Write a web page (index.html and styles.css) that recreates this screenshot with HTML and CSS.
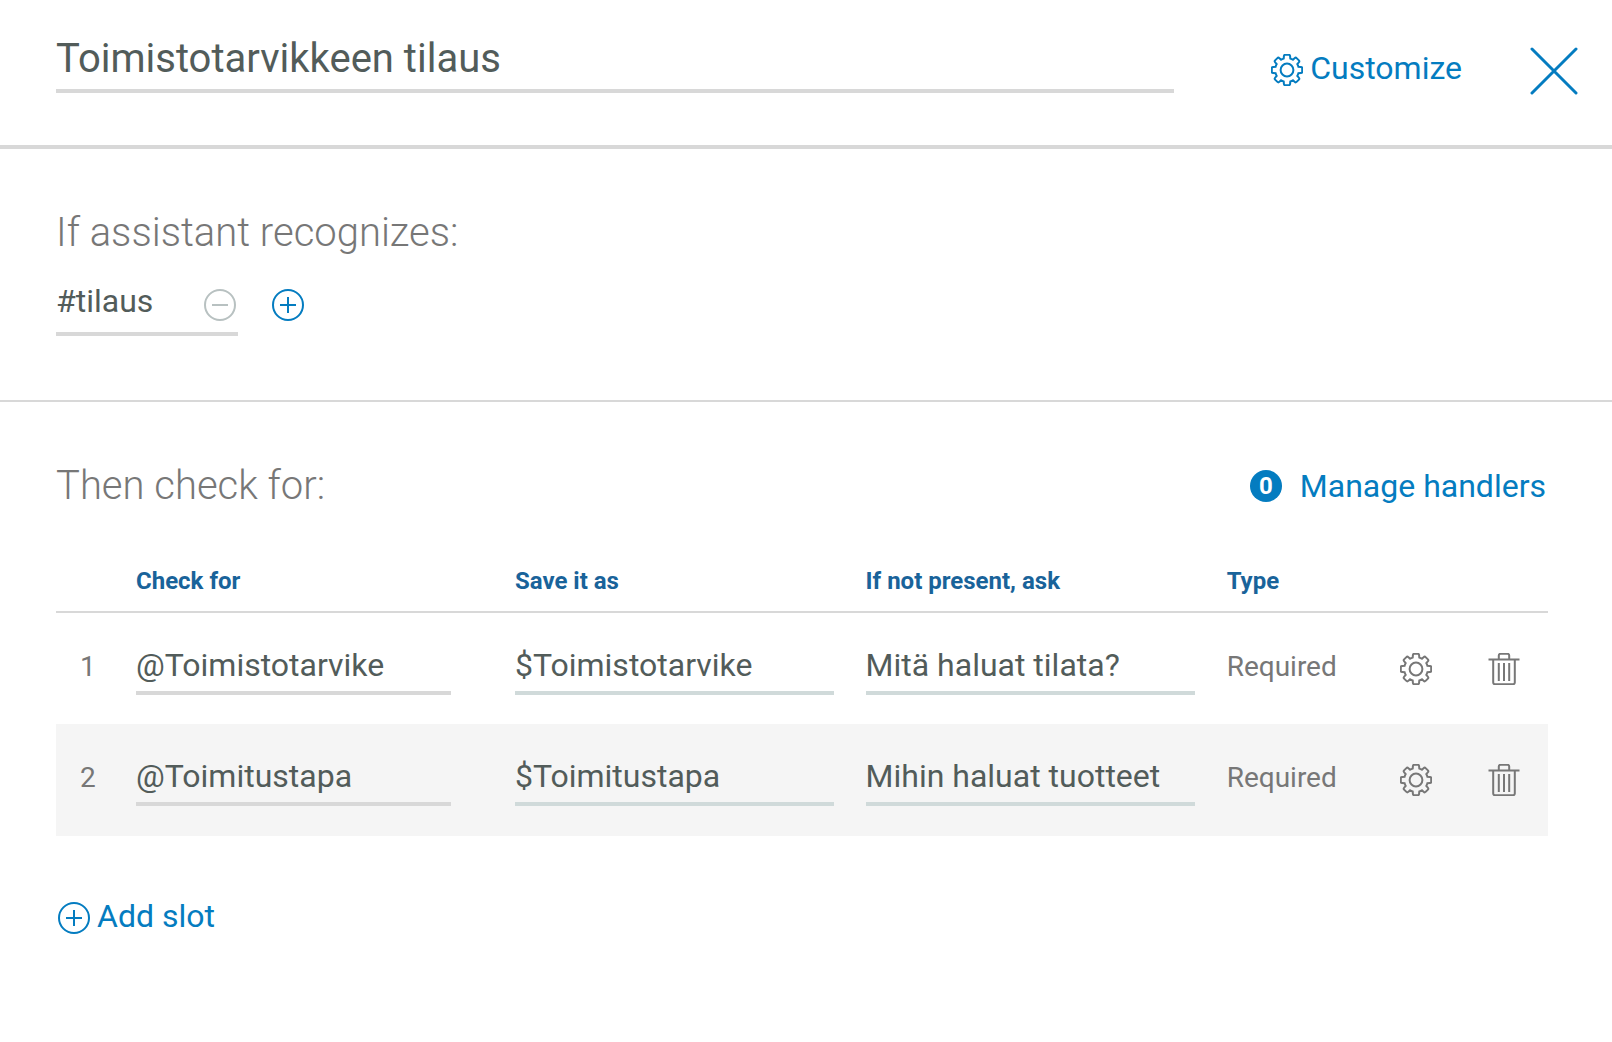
FILE: index.html
```html
<!DOCTYPE html>
<html lang="en">
<head>
<meta charset="utf-8">
<meta name="viewport" content="width=device-width, initial-scale=1">
<title>Toimistotarvikkeen tilaus</title>
<link rel="stylesheet" href="styles.css">
</head>
<body>
<svg class="sprite" aria-hidden="true">
  <symbol id="gear" viewBox="0 0 32 32">
    <path d="M12.700 4.600L12.900 2.100Q13 .8 14.200 .8H17.800Q19 .8 19.100 2.100L19.300 4.600Q20.700 5 21.900 5.700L23.600 4.200Q24.700 3.200 25.600 4.100L27.900 6.400Q28.800 7.300 27.800 8.400L26.300 10.100Q27 11.300 27.400 12.700L29.900 12.900Q31.200 13 31.200 14.200V17.800Q31.200 19 29.900 19.100L27.400 19.300Q27 20.700 26.300 21.900L27.800 23.600Q28.800 24.700 27.900 25.600L25.600 27.900Q24.700 28.800 23.600 27.800L21.900 26.300Q20.700 27 19.300 27.400L19.100 29.900Q19 31.200 17.800 31.200H14.200Q13 31.200 12.900 29.900L12.700 27.400Q11.300 27 10.100 26.300L8.400 27.800Q7.300 28.800 6.400 27.900L4.100 25.600Q3.200 24.700 4.200 23.600L5.700 21.900Q5 20.700 4.600 19.300L2.100 19.100Q.8 19 .8 17.800V14.200Q.8 13 2.100 12.900L4.600 12.700Q5 11.300 5.700 10.100L4.200 8.400Q3.200 7.300 4.100 6.400L6.400 4.100Q7.300 3.200 8.400 4.200L10.100 5.700Q11.300 5 12.700 4.600Z"/>
    <circle cx="16" cy="16" r="6.400"/>
  </symbol>
  <symbol id="plus" viewBox="0 0 32 32">
    <circle cx="16" cy="16" r="15"/>
    <path d="M8 16H24M16 8V24"/>
  </symbol>
  <symbol id="minus" viewBox="0 0 32 32">
    <circle cx="16" cy="16" r="15"/>
    <path d="M8 16H24"/>
  </symbol>
  <symbol id="trash" viewBox="0 0 32 32">
    <path d="M.5 6.500H31.500M5.200 6.500V29.500Q5.200 31.200 6.900 31.200H25.100Q26.800 31.200 26.800 29.500V6.500M10.800 6.500V2.500Q10.800 .8 12.500 .8H19.500Q21.200 .8 21.200 2.500V6.500M10.800 10V28M16 10V28M21.200 10V28"/>
  </symbol>
</svg>

<header class="header">
  <input class="field field-title" type="text" aria-label="Node name" value="Toimistotarvikkeen tilaus">
  <button class="action customize" type="button"><svg class="icon"><use href="#gear"/></svg>Customize</button>
  <button class="icon-button close" type="button" aria-label="Close">
    <svg class="close-icon" viewBox="0 0 48 48"><path d="M2 2L46 46M46 2L2 46"/></svg>
  </button>
</header>

<main>
  <section class="condition">
    <h2 class="heading">If assistant recognizes:</h2>
    <div class="condition-row">
      <div class="intent">
        <input class="intent-input" type="text" aria-label="Condition" value="#tilaus">
        <button class="icon-button muted" type="button" aria-label="Remove condition"><svg class="icon"><use href="#minus"/></svg></button>
      </div>
      <button class="icon-button primary" type="button" aria-label="Add condition"><svg class="icon"><use href="#plus"/></svg></button>
    </div>
  </section>

  <section class="slots">
    <div class="slots-head">
      <h2 class="heading">Then check for:</h2>
      <button class="action handlers" type="button"><span class="badge">0</span>Manage handlers</button>
    </div>
    <table class="slot-table">
      <colgroup>
        <col class="col-number"><col class="col-check"><col class="col-save"><col class="col-ask"><col><col class="col-settings"><col class="col-delete">
      </colgroup>
      <thead>
        <tr><th></th><th scope="col">Check for</th><th scope="col">Save it as</th><th scope="col">If not present, ask</th><th scope="col">Type</th><th></th><th></th></tr>
      </thead>
      <tbody>
        <tr>
          <td class="number">1</td>
          <td class="check"><input class="field" type="text" aria-label="Check for, slot 1" value="@Toimistotarvike"></td>
          <td class="save"><input class="field field-cool" type="text" aria-label="Save it as, slot 1" value="$Toimistotarvike"></td>
          <td class="ask"><input class="field field-cool" type="text" aria-label="If not present, ask, slot 1" value="Mitä haluat tilata?"></td>
          <td class="type">Required</td>
          <td><button class="icon-button" type="button" aria-label="Edit slot 1"><svg class="icon"><use href="#gear"/></svg></button></td>
          <td><button class="icon-button" type="button" aria-label="Delete slot 1"><svg class="icon"><use href="#trash"/></svg></button></td>
        </tr>
        <tr>
          <td class="number">2</td>
          <td class="check"><input class="field" type="text" aria-label="Check for, slot 2" value="@Toimitustapa"></td>
          <td class="save"><input class="field field-cool" type="text" aria-label="Save it as, slot 2" value="$Toimitustapa"></td>
          <td class="ask"><input class="field field-cool" type="text" aria-label="If not present, ask, slot 2" value="Mihin haluat tuotteet"></td>
          <td class="type">Required</td>
          <td><button class="icon-button" type="button" aria-label="Edit slot 2"><svg class="icon"><use href="#gear"/></svg></button></td>
          <td><button class="icon-button" type="button" aria-label="Delete slot 2"><svg class="icon"><use href="#trash"/></svg></button></td>
        </tr>
      </tbody>
    </table>
    <button class="action add-slot" type="button"><svg class="icon"><use href="#plus"/></svg>Add slot</button>
  </section>
</main>
</body>
</html>
```

FILE: styles.css
```css
* {
  box-sizing: border-box;
}

body {
  margin: 0;
  background: #fff;
  color: #525c5a;
  font-family: Roboto, "Liberation Sans", sans-serif;
  font-size: 32px;
  line-height: 40px;
}

button,
input {
  margin: 0;
  padding: 0;
  border: 0;
  border-radius: 0;
  background: transparent;
  color: inherit;
  font: inherit;
}

button {
  cursor: pointer;
}

.sprite {
  position: absolute;
  width: 0;
  height: 0;
}

.icon,
.close-icon {
  display: block;
  flex: none;
  fill: none;
  stroke: currentColor;
  stroke-width: 2px;
}

.icon {
  width: 32px;
  height: 32px;
}

.close-icon {
  width: 48px;
  height: 48px;
  stroke-width: 3px;
  stroke-linecap: round;
}

.icon-button {
  display: block;
  flex: none;
  color: #777;
}

.icon-button.muted {
  color: #b8c1c1;
}

.icon-button.primary,
.icon-button.close {
  color: #047cc0;
}

.action {
  display: flex;
  align-items: center;
  flex: none;
  gap: 7px;
  color: #047cc0;
  white-space: nowrap;
}

.action .icon {
  margin-top: 4px;
}

.field {
  display: block;
  width: 100%;
  height: 52px;
  padding-bottom: 4px;
  border-bottom: 4px solid #d8d8d8;
}

.field-cool {
  border-bottom-color: #d0dada;
}

.header {
  display: flex;
  align-items: flex-start;
  padding: 28px 34px 50px 56px;
  border-bottom: 4px solid #d8d8d8;
}

.field-title {
  flex: 1;
  min-width: 0;
  height: 65px;
  padding-bottom: 0;
  font-size: 40px;
}

.customize {
  margin: 20px 68px 0 97px;
}

.close {
  margin-top: 19px;
}

.heading {
  margin: 0;
  color: #777;
  font-size: 40px;
  font-weight: 300;
  line-height: 48px;
}

.condition {
  padding: 60px 56px 64px;
  border-bottom: 2px solid #d8d8d8;
}

.condition-row {
  display: flex;
  align-items: flex-start;
  gap: 34px;
  margin-top: 22px;
}

.intent {
  display: flex;
  align-items: flex-start;
  width: 182px;
  height: 57px;
  padding-right: 2px;
  border-bottom: 4px solid #d8d8d8;
}

.intent-input {
  flex: 1;
  min-width: 0;
  height: 44px;
}

.condition .icon-button {
  margin-top: 10px;
}

.slots {
  padding: 60px 64px 56px 56px;
}

.slots-head {
  display: flex;
  justify-content: space-between;
  align-items: center;
}

.handlers {
  gap: 18px;
  margin-right: 2px;
}

.badge {
  width: 32px;
  height: 32px;
  border-radius: 50%;
  background: #047cc0;
  color: #fff;
  font-size: 24px;
  font-weight: 700;
  line-height: 32px;
  text-align: center;
}

.slot-table {
  width: 100%;
  margin-top: 52px;
  border-collapse: collapse;
  table-layout: fixed;
}

.col-number { width: 80px; }
.col-check { width: 25.4%; }
.col-save { width: 23.5%; }
.col-ask { width: 24.2%; }
.col-settings { width: 88px; }
.col-delete { width: 60px; }

.slot-table th {
  height: 50px;
  padding: 0 0 12px;
  border-bottom: 2px solid #d8d8d8;
  color: #19639a;
  font-size: 24px;
  font-weight: 700;
  line-height: 32px;
  text-align: left;
}

.slot-table td {
  height: 112px;
  padding: 0;
}

.slot-table tbody tr:nth-child(even) {
  background: #f5f5f5;
}

.slot-table .number,
.slot-table .type {
  padding-bottom: 4px;
  color: #777;
  font-size: 28px;
}

.slot-table .number {
  padding-left: 24px;
}

.slot-table .check {
  padding-right: 64px;
}

.slot-table .save,
.slot-table .ask {
  padding-right: 32px;
}

.add-slot {
  margin: 60px 0 0 2px;
}
```
